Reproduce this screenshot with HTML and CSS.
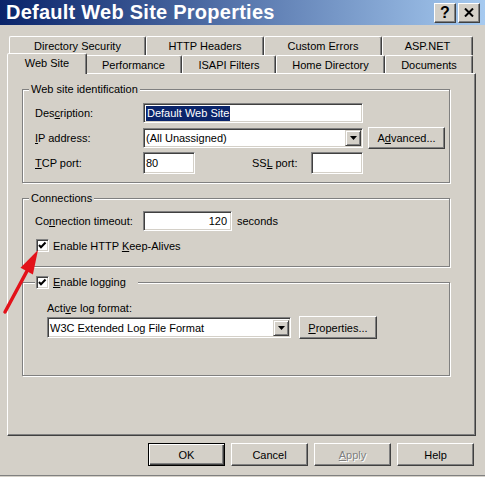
FILE: index.html
```html
<!DOCTYPE html>
<html lang="en">
<head>
  <meta charset="UTF-8" />
  <meta name="viewport" content="width=device-width, initial-scale=1.0" />
  <title>Default Web Site Properties</title>
  <link rel="stylesheet" href="styles.css">
</head>
<body>
  <div class="window">
    <div class="titlebar">
      <span class="title">Default Web Site Properties</span>
      <div class="caption-buttons">
        <span class="caption-btn">?</span>
        <span class="caption-btn">
          <svg width="10" height="9" viewBox="0 0 10 9"><path d="M1 0.5 L9 8.5 M9 0.5 L1 8.5" stroke="#000" stroke-width="2"/></svg>
        </span>
      </div>
    </div>

    <div class="tabstrip">
      <div class="tab-row back">
        <span class="tab tab-dirsec">Directory Security</span>
        <span class="tab tab-headers">HTTP Headers</span>
        <span class="tab tab-errors">Custom Errors</span>
        <span class="tab tab-aspnet">ASP.NET</span>
      </div>
      <div class="tab-row front">
        <span class="tab tab-website active">Web Site</span>
        <span class="tab tab-perf">Performance</span>
        <span class="tab tab-isapi">ISAPI Filters</span>
        <span class="tab tab-homedir">Home Directory</span>
        <span class="tab tab-docs">Documents</span>
      </div>
    </div>

    <div class="tab-page">
      <div class="group group-ident">
        <span class="group-caption">Web site identification</span>
        <div class="field-row row-desc">
          <span class="field-label">Des<u>c</u>ription:</span>
          <div class="textbox wide"><span class="selected-text">Default Web Site</span></div>
        </div>
        <div class="field-row row-ip">
          <span class="field-label"><u>I</u>P address:</span>
          <div class="combo wide">
            <span class="combo-text">(All Unassigned)</span>
            <span class="combo-arrow"><svg width="7" height="4" viewBox="0 0 7 4"><path d="M0 0 H7 L3.5 4 Z" fill="#000"/></svg></span>
          </div>
          <span class="btn btn-advanced">A<u>d</u>vanced...</span>
        </div>
        <div class="field-row row-ports">
          <span class="field-label"><u>T</u>CP port:</span>
          <div class="textbox port">80</div>
          <span class="ssl-label">SS<u>L</u> port:</span>
          <div class="textbox port"></div>
        </div>
      </div>

      <div class="group group-conn">
        <span class="group-caption">Connections</span>
        <div class="field-row row-timeout">
          <span class="field-label">Co<u>n</u>nection timeout:</span>
          <div class="textbox timeout">120</div>
          <span class="unit">seconds</span>
        </div>
        <div class="check-row">
          <span class="checkbox"><svg width="11" height="11" viewBox="0 0 11 11"><polyline points="2,5 4,7.3 8.5,2.5" fill="none" stroke="#000" stroke-width="2"/></svg></span>
          <span>Enable HTTP <u>K</u>eep-Alives</span>
        </div>
      </div>

      <div class="group group-logging">
        <span class="group-caption check-caption">
          <span class="checkbox"><svg width="11" height="11" viewBox="0 0 11 11"><polyline points="2,5 4,7.3 8.5,2.5" fill="none" stroke="#000" stroke-width="2"/></svg></span>
          <span><u>E</u>nable logging</span>
        </span>
        <div class="log-label">Acti<u>v</u>e log format:</div>
        <div class="field-row row-logformat">
          <div class="combo logformat">
            <span class="combo-text">W3C Extended Log File Format</span>
            <span class="combo-arrow"><svg width="7" height="4" viewBox="0 0 7 4"><path d="M0 0 H7 L3.5 4 Z" fill="#000"/></svg></span>
          </div>
          <span class="btn btn-props"><u>P</u>roperties...</span>
        </div>
      </div>
    </div>

    <div class="dialog-buttons">
      <span class="btn default">OK</span>
      <span class="btn">Cancel</span>
      <span class="btn disabled"><u>A</u>pply</span>
      <span class="btn">Help</span>
    </div>

    <!-- red callout pointing at the keep-alive checkbox -->
    <svg class="pointer-arrow" width="45" height="72" viewBox="0 0 45 72">
      <line x1="5" y1="67" x2="27" y2="26" stroke="#e3121a" stroke-width="3.5" stroke-linecap="round"/>
      <polygon points="38,5 20.5,22.8 32.9,29.4" fill="#e3121a"/>
    </svg>
  </div>
</body>
</html>
```

FILE: styles.css
```css
* { box-sizing: border-box; }
body {
  margin: 0;
  background: #d4d0c8;
  font-family: "Liberation Sans", Arial, sans-serif;
  font-size: 11px;
  color: #000;
}
u { text-underline-offset: 1px; }

.window {
  position: relative;
  width: 485px;
  height: 476px;
  border-bottom: 1px solid #808080;
  overflow: hidden;
}

/* title bar */
.titlebar {
  display: flex;
  align-items: center;
  justify-content: space-between;
  height: 25px;
  padding: 0 5px 0 6px;
  background: linear-gradient(to right, #0a246a, #a6caf0);
}
.title {
  color: #fff;
  font-weight: bold;
  font-size: 20px;
  letter-spacing: 0.25px;
  line-height: 25px;
  white-space: nowrap;
}
.caption-buttons { display: flex; gap: 2px; }
.caption-btn {
  display: flex;
  align-items: center;
  justify-content: center;
  width: 22px;
  height: 20px;
  background: #d4d0c8;
  border: 1px solid;
  border-color: #fff #404040 #404040 #fff;
  box-shadow: inset -1px -1px #808080;
  font-weight: bold;
  font-size: 16px;
  line-height: 1;
}

/* tabs */
.tabstrip { padding: 11px 0 0 9px; }
.tab-row { display: flex; }
.tab-row.back { height: 19px; }
.tab-row.front { height: 18px; align-items: flex-end; }
.tab {
  display: flex;
  align-items: center;
  justify-content: center;
  height: 100%;
  border: 1px solid;
  border-bottom: 0;
  border-color: #fff #404040 transparent #fff;
  box-shadow: inset -1px 0 #808080;
  border-radius: 2px 2px 0 0;
  white-space: nowrap;
}
.tab.active {
  position: relative;
  z-index: 1;
  height: 21px;
  margin: 0 -2px -1px;
  padding-bottom: 2px;
  background: #d4d0c8;
}
.tab-dirsec { width: 137px; }
.tab-headers { width: 118px; }
.tab-errors { width: 118px; }
.tab-aspnet { width: 91px; }
.tab-website { width: 80px; }
.tab-perf { width: 97px; }
.tab-isapi { width: 94px; }
.tab-homedir { width: 109px; }
.tab-docs { width: 88px; }

.tab-page {
  width: 469px;
  height: 363px;
  margin-left: 7px;
  padding-top: 15px;
  border: 1px solid;
  border-color: #fff #404040 #404040 #fff;
  box-shadow: inset -1px -1px #808080;
}

/* group boxes */
.group {
  width: 428px;
  margin: 15px 0 0 14px;
  padding-left: 12px;
  border: 1px solid #808080;
  box-shadow: 1px 1px 0 #fff, inset 1px 1px 0 #fff;
}
.group:first-child { margin-top: 0; }
.group-caption {
  display: block;
  width: fit-content;
  margin: -7px 0 0 -6px;
  padding: 0 2px;
  line-height: 13px;
  background: #d4d0c8;
}
.group-ident { padding-bottom: 8px; }
.group-conn { padding-bottom: 14px; }
.group-logging { padding-left: 24px; padding-bottom: 36px; }

.field-row { display: flex; align-items: center; }
.field-label { width: 108px; flex: none; }
.row-desc { margin-top: 7px; height: 20px; }
.row-ip { margin-top: 4px; height: 22px; }
.row-ports { margin-top: 3px; height: 22px; }
.row-timeout { margin-top: 6px; height: 20px; }

/* sunken edit fields */
.textbox, .combo {
  display: flex;
  align-items: center;
  height: 20px;
  padding: 0 2px;
  background: #fff;
  border: 1px solid;
  border-color: #808080 #fff #fff #808080;
  box-shadow: inset 1px 1px #404040, inset -1px -1px #d4d0c8;
  white-space: nowrap;
}
.wide { width: 220px; }
.port { width: 52px; height: 22px; }
.timeout { width: 89px; justify-content: flex-end; padding-right: 4px; }
.selected-text {
  display: inline-block;
  padding: 0 1px;
  line-height: 15px;
  background: #0a246a;
  color: #fff;
}
.ssl-label { width: 59px; margin-left: 57px; }
.unit { margin-left: 5px; }

.combo { padding: 0 2px 0 2px; }
.combo-text { flex: 1; }
.combo-arrow {
  display: flex;
  align-items: center;
  justify-content: center;
  width: 16px;
  height: 16px;
  background: #d4d0c8;
  border: 1px solid;
  border-color: #d4d0c8 #404040 #404040 #d4d0c8;
  box-shadow: inset 1px 1px #fff, inset -1px -1px #808080;
}
.combo .combo-arrow { margin-right: -1px; }

/* raised push buttons */
.btn {
  display: flex;
  align-items: center;
  justify-content: center;
  height: 23px;
  background: #d4d0c8;
  border: 1px solid;
  border-color: #fff #404040 #404040 #fff;
  box-shadow: inset -1px -1px #808080;
  white-space: nowrap;
}
.btn-advanced { width: 77px; height: 22px; margin-left: 5px; }
.btn-props { width: 78px; margin-left: 8px; }
.btn.default {
  border: 1px solid #000;
  box-shadow: inset 1px 1px #fff, inset -1px -1px #404040, inset -2px -2px #808080;
}
.btn.disabled { color: #808080; text-shadow: 1px 1px 0 #fff; }

/* check boxes */
.check-row {
  display: flex;
  align-items: center;
  gap: 4px;
  height: 13px;
  margin: 8px 0 0 1px;
}
.checkbox {
  flex: none;
  width: 13px;
  height: 13px;
  background: #fff;
  border: 1px solid;
  border-color: #808080 #fff #fff #808080;
  box-shadow: inset 1px 1px #404040, inset -1px -1px #d4d0c8;
}
.checkbox svg { display: block; }
.check-caption {
  display: flex;
  align-items: center;
  gap: 4px;
  height: 13px;
  margin-left: -12px;
  padding: 0 12px 0 1px;
}

.log-label { margin-top: 13px; line-height: 13px; }
.row-logformat { margin-top: 1px; height: 23px; }
.logformat { width: 244px; height: 21px; }

.dialog-buttons {
  display: flex;
  justify-content: flex-end;
  gap: 6px;
  margin-top: 7px;
  padding-right: 11px;
}
.dialog-buttons .btn { width: 77px; }

.pointer-arrow {
  position: absolute;
  left: 0;
  top: 245px;
}
```
